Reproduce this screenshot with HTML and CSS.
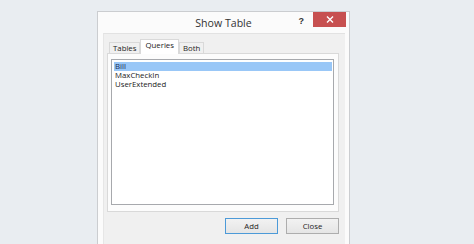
FILE: index.html
```html
<!DOCTYPE html>
<html>
<head>
<meta charset="utf-8">
<link rel="stylesheet" href="styles.css">
</head>
<body>
<div class="dialog">
  <div class="titlebar">
    <div></div>
    <div class="title">Show Table</div>
    <div class="controls">
      <span class="help">?</span>
      <span class="close">
        <svg width="8" height="7" viewBox="0 0 8 7"><path d="M1 0.5 L7 6.5 M7 0.5 L1 6.5" stroke="#fff" stroke-width="1.4"/></svg>
      </span>
    </div>
  </div>
  <div class="client">
    <div class="tabs">
      <div class="tab">Tables</div>
      <div class="tab active">Queries</div>
      <div class="tab">Both</div>
    </div>
    <div class="panel">
      <div class="listbox">
        <div class="row selected">Bill</div>
        <div class="row">MaxCheckIn</div>
        <div class="row">UserExtended</div>
      </div>
    </div>
    <div class="buttons">
      <div class="btn default">Add</div>
      <div class="btn">Close</div>
    </div>
  </div>
</div>
</body>
</html>
```

FILE: styles.css
```css
html, body {
  margin: 0;
  padding: 0;
}
body {
  background: #e9edf1;
  padding: 11px 0 0 97px;
  height: 244px;
  box-sizing: border-box;
  overflow: hidden;
  font-family: "Open Sans", "Liberation Sans", sans-serif;
  color: #1e1e1e;
}
.dialog {
  width: 253px;
  height: 240px;
  box-sizing: border-box;
  border: 1px solid #cbcdd0;
  background: #fbfbfb;
  display: flex;
  flex-direction: column;
}
.titlebar {
  height: 21px;
  display: grid;
  grid-template-columns: 1fr auto 1fr;
  align-items: center;
}
.title {
  font-size: 10.6px;
  color: #333;
  line-height: 21px;
  padding-top: 1px;
}
.controls {
  display: flex;
  justify-content: flex-end;
  align-items: flex-start;
  align-self: start;
  height: 21px;
}
.help {
  font-family: "Liberation Sans", sans-serif;
  font-weight: bold;
  font-size: 9px;
  color: #333;
  margin-top: 4px;
  margin-right: 9px;
}
.close {
  width: 33px;
  height: 15px;
  background: #c75050;
  display: flex;
  align-items: center;
  justify-content: center;
  margin-right: 3px;
}
.client {
  flex: 1;
  margin: 0 4px 0 5px;
  background: #f0f0f0;
  border-top: 1px solid #e2e2e2;
  border-left: 1px solid #e6e6e6;
  padding: 5px 6px 0 3px;
  display: flex;
  flex-direction: column;
}
.tabs {
  display: flex;
  align-items: flex-end;
  padding-left: 2px;
  height: 14px;
  position: relative;
  z-index: 1;
}
.tab {
  height: 11px;
  box-sizing: border-box;
  border: 1px solid #d9d9d9;
  border-bottom: none;
  background: #f0f0f0;
  font-size: 7.8px;
  line-height: 10px;
  padding: 0 3px;
  color: #222;
}
.tab.active {
  height: 15px;
  margin-bottom: -1px;
  background: #fff;
  line-height: 11px;
  padding: 0 4px;
}
.panel {
  height: 159px;
  box-sizing: border-box;
  border: 1px solid #d9d9d9;
  background: #fcfcfc;
  padding: 5px 4px 6px 3px;
}
.listbox {
  height: 100%;
  box-sizing: border-box;
  border: 1px solid #a7a9ad;
  background: #fff;
  padding: 2px 1px 0 2px;
}
.row {
  font-size: 7.8px;
  height: 9px;
  line-height: 9px;
  padding-left: 1px;
  color: #1a1a1a;
}
.row.selected {
  background: #99c7f7;
  color: #1b2c55;
}
.buttons {
  display: flex;
  justify-content: flex-end;
  gap: 8px;
  margin-top: 6px;
  padding-right: 0;
}
.btn {
  width: 53px;
  height: 16px;
  box-sizing: border-box;
  border: 1px solid #adadad;
  background: linear-gradient(#f2f2f2, #e5e5e5);
  font-size: 7.8px;
  line-height: 14px;
  text-align: center;
  color: #222;
}
.btn.default {
  border-color: #4c9ad8;
}
```
